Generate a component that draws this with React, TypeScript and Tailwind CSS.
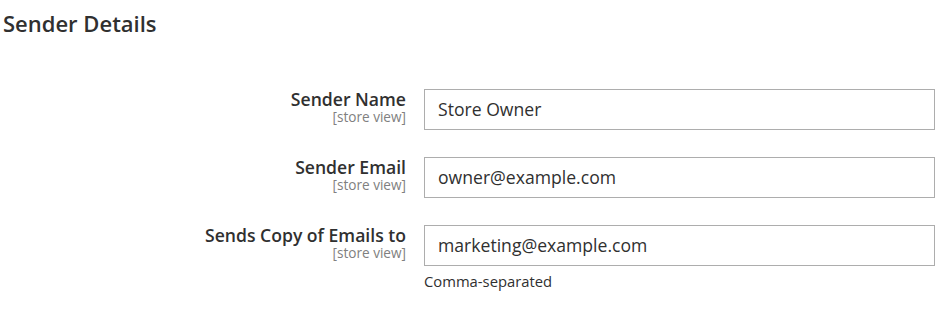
import React from "react";

const rows = [
  { label: "Sender Name", value: "Store Owner" },
  { label: "Sender Email", value: "owner@example.com" },
  { label: "Sends Copy of Emails to", value: "marketing@example.com", note: "Comma-separated" },
];

export default function App() {
  return (
    <div
      className="w-[951px] h-[310px] bg-white text-[#303030] overflow-hidden"
      style={{ fontFamily: '"Open Sans", sans-serif' }}
    >
      <h2 className="pl-[3px] pt-[9px] text-[22px] leading-[28px] font-semibold text-[#303030]">
        Sender Details
      </h2>
      <div className="mt-[52px] flex flex-col gap-[27px]">
        {rows.map((r) => (
          <div key={r.label} className="flex items-start">
            <div className="w-[424px] pr-[18px] flex flex-col items-end">
              <span className="text-[17.6px] leading-[20px] font-semibold text-[#303030]">{r.label}</span>
              <span className="text-[13.6px] leading-[16px] text-[#808080]">[store view]</span>
            </div>
            <div className="flex flex-col">
              <div className="w-[511px] h-[41px] border border-[#adadad] flex items-center px-[13px] text-[17.6px] text-[#303030]">
                {r.value}
              </div>
              {r.note && (
                <div className="mt-[6px] text-[14.8px] leading-[18px] text-[#303030]">{r.note}</div>
              )}
            </div>
          </div>
        ))}
      </div>
    </div>
  );
}
